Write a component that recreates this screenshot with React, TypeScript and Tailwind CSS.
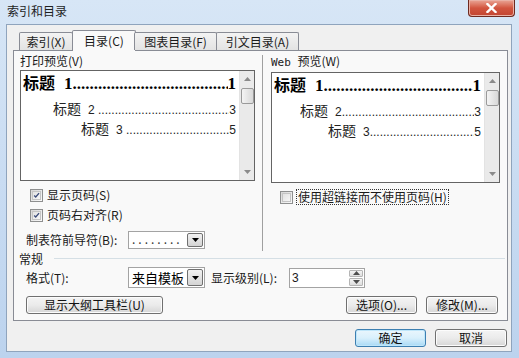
import React from 'react';

function Check({ checked }: { checked?: boolean }) {
  return (
    <span className="w-[13px] h-[13px] border border-[#8e8f8f] bg-gradient-to-br from-[#d6d6d6] to-[#fafafa] flex items-center justify-center shrink-0">
      <span className="w-[9px] h-[9px] border border-[#c4c4c4] bg-gradient-to-br from-[#e2e2e2] to-[#f6f6f6] flex items-center justify-center">
        {checked && (
          <svg width="9" height="9" viewBox="0 0 9 9">
            <path d="M1.5 4.5 L3.5 6.5 L7.8 1.5" fill="none" stroke="#3c4c7a" strokeWidth="1.7" />
          </svg>
        )}
      </span>
    </span>
  );
}

function Btn({ label, w, focus }: { label: string; w: string; focus?: boolean }) {
  return (
    <div
      className={`${w} h-[18px] rounded-[3px] border flex items-center justify-center text-[12px] leading-none text-[#111] ${
        focus
          ? 'border-[#3c7fb1] bg-gradient-to-b from-[#eaf6fd] via-[#d9f0fc] to-[#a7d9f5] shadow-[inset_0_0_0_1px_#bfe6fa]'
          : 'border-[#707070] bg-gradient-to-b from-[#f4f4f4] via-[#ebebeb] to-[#d6d6d6] shadow-[inset_0_0_0_1px_#fcfcfc]'
      }`}
    >
      {label}
    </div>
  );
}

function Arrow({ up }: { up?: boolean }) {
  return (
    <svg width="7" height="4" viewBox="0 0 7 4">
      <path d={up ? 'M0 4 L3.5 0 L7 4 Z' : 'M0 0 L3.5 4 L7 0 Z'} fill="#4d4d4d" />
    </svg>
  );
}

function DropBtn() {
  return (
    <div className="w-[16px] self-stretch m-px rounded-[2px] border border-[#707070] bg-gradient-to-b from-[#f2f2f2] to-[#d4d4d4] flex items-center justify-center">
      <svg width="7" height="4" viewBox="0 0 7 4">
        <path d="M0 0 L3.5 4 L7 0 Z" fill="#000" />
      </svg>
    </div>
  );
}

function ScrollBar() {
  return (
    <div className="w-[15px] shrink-0 bg-[#eaeaea] border-l border-[#e3e3e3] flex flex-col items-center pt-[6px] pb-[6px]">
      <svg width="7" height="4" viewBox="0 0 7 4">
        <path d="M0 4 L3.5 0 L7 4 Z" fill="#8a8a8a" />
      </svg>
      <div className="mt-[7px] w-[13px] h-[16px] rounded-[2px] border border-[#9a9a9a] bg-gradient-to-r from-[#f4f4f4] to-[#d8d8d8]" />
      <div className="flex-1" />
      <svg width="7" height="4" viewBox="0 0 7 4">
        <path d="M0 0 L3.5 4 L7 0 Z" fill="#8a8a8a" />
      </svg>
    </div>
  );
}

function Leader({ bold }: { bold?: boolean }) {
  return (
    <span className="flex-1 min-w-0 overflow-hidden whitespace-nowrap text-clip">
      {bold ? '.'.repeat(80) : '.'.repeat(120)}
    </span>
  );
}

function Preview({ web }: { web?: boolean }) {
  const sp = web ? '' : ' ';
  return (
    <div className={`${web ? 'w-[229px]' : 'w-[235px]'} h-[111px] border border-[#646464] bg-white flex`}>
      <div className="flex-1 min-w-0 flex flex-col pl-[2px] pr-[3px] pt-[3px] text-black">
        <div className="flex items-baseline h-[20px] font-['Liberation_Serif',serif] font-bold text-[17px] leading-none">
          <span className="font-['Noto_Sans_CJK_SC',sans-serif] text-[16px] mr-[9px]">标题</span>
          <span>1</span>
          <Leader bold />
          <span>1</span>
        </div>
        <div className={`flex items-baseline mt-[7px] ${web ? 'ml-[26px]' : 'ml-[30px]'} text-[12px] leading-none font-['Liberation_Sans',sans-serif] text-[#222]`}>
          <span className="font-['Noto_Sans_CJK_SC',sans-serif] text-[14px] mr-[7px]">标题</span>
          <span className="whitespace-pre">2{sp}</span>
          <Leader />
          <span>3</span>
        </div>
        <div className={`flex items-baseline mt-[5px] ${web ? 'ml-[54px]' : 'ml-[58px]'} text-[12px] leading-none font-['Liberation_Sans',sans-serif] text-[#222]`}>
          <span className="font-['Noto_Sans_CJK_SC',sans-serif] text-[14px] mr-[7px]">标题</span>
          <span className="whitespace-pre">3{sp}</span>
          <Leader />
          <span>5</span>
        </div>
      </div>
      <ScrollBar />
    </div>
  );
}

const tabs = [
  { label: '索引(X)', w: 'w-[54px]' },
  { label: '目录(C)', w: 'w-[64px]', active: true },
  { label: '图表目录(F)', w: 'w-[83px]' },
  { label: '引文目录(A)', w: 'w-[83px]' },
];

export default function App() {
  return (
    <div className="w-[519px] h-[358px] flex flex-col bg-gradient-to-b from-[#d7e6f6] via-[#c9dcf2] to-[#bcd3ee] font-['Noto_Sans_CJK_SC','Liberation_Sans',sans-serif] text-[12px] text-[#1a1a1a] overflow-hidden">
      {/* title bar */}
      <div className="h-[24px] shrink-0 flex items-start justify-between">
        <span className="pl-[7px] pt-[4px] text-[12px] leading-[14px] text-[#1e1e1e]">索引和目录</span>
        <div className="mr-[4px] w-[47px] h-[17px] rounded-b-[4px] border border-t-0 border-[#6e2a20] bg-gradient-to-b from-[#e9a596] via-[#d2553f] to-[#c14431] flex items-center justify-center shadow-[inset_0_0_0_1px_#eab1a5]">
          <svg width="11" height="10" viewBox="0 0 11 10">
            <path d="M1.5 1 L9.5 9 M9.5 1 L1.5 9" stroke="#fff" strokeWidth="2.4" strokeLinecap="square" />
          </svg>
        </div>
      </div>

      {/* client area */}
      <div className="flex-1 ml-[6px] mr-[7px] mb-[6px] border border-[#8fa4bd] bg-[#f0f0f0] pt-[5px] pl-[6px] pr-[3px] flex flex-col">
        {/* tabs */}
        <div className="h-[20px] flex items-end pl-[6px] relative z-10">
          {tabs.map(t =>
            t.active ? (
              <div
                key={t.label}
                className={`${t.w} h-[21px] -mb-px -mx-px border border-b-0 border-[#898c95] bg-[#f9f9f9] flex items-center justify-center leading-none rounded-t-[2px]`}
              >
                {t.label}
              </div>
            ) : (
              <div
                key={t.label}
                className={`${t.w} h-[18px] border border-b-0 border-[#898c95] -ml-px first:ml-0 bg-gradient-to-b from-[#f3f3f3] to-[#e3e3e3] flex items-center justify-center leading-none rounded-t-[2px]`}
              >
                {t.label}
              </div>
            ),
          )}
        </div>

        {/* panel */}
        <div className="h-[271px] border border-[#898c95] bg-[#f9f9f9] flex flex-col">
          <div className="h-[200px] flex">
            <div className="w-[248px] pl-[6px] pt-[3px] flex flex-col">
              <span className="leading-[14px]">打印预览(V)</span>
              <div className="mt-[2px]">
                <Preview />
              </div>
              <div className="mt-[6px] ml-[10px] h-[16px] flex items-center gap-[4px]">
                <Check checked />
                <span className="leading-none">显示页码(S)</span>
              </div>
              <div className="mt-[4px] ml-[10px] h-[16px] flex items-center gap-[4px]">
                <Check checked />
                <span className="leading-none">页码右对齐(R)</span>
              </div>
              <div className="mt-[8px] ml-[6px] h-[18px] flex items-center">
                <span className="w-[102px] leading-none">制表符前导符(B):</span>
                <div className="w-[77px] h-[18px] border border-[#a3a3a3] bg-white flex">
                  <span className="flex-1 pl-[3px] leading-[14px] tracking-[3px] text-[#333]">........</span>
                  <DropBtn />
                </div>
              </div>
            </div>
            <div className="w-px mt-[4px] bg-[#a0a0a0]" />
            <div className="flex-1 pl-[8px] pt-[3px] flex flex-col">
              <span className="leading-[14px] font-['DejaVu_Sans_Mono','Noto_Sans_CJK_SC',monospace] text-[11px]">
                Web <span className="font-['Noto_Sans_CJK_SC',sans-serif] text-[12px]">预览(W)</span>
              </span>
              <div className="mt-[2px]">
                <Preview web />
              </div>
              <div className="mt-[6px] ml-[9px] h-[16px] flex items-center gap-[3px]">
                <Check />
                <span className="leading-none px-px py-[1px] border border-dotted border-[#333]">使用超链接而不使用页码(H)</span>
              </div>
            </div>
          </div>

          {/* general */}
          <div className="h-[15px] flex items-center pl-[5px] pr-[2px]">
            <span className="leading-none">常规</span>
            <div className="flex-1 ml-[11px] h-px bg-[#d5dfe5]" />
          </div>
          <div className="mt-[1px] h-[21px] flex items-center pl-[12px]">
            <span className="w-[102px] leading-none">格式(T):</span>
            <div className="w-[77px] h-[21px] border border-[#a3a3a3] bg-white flex">
              <span className="flex-1 pl-[3px] text-[13px] leading-[19px] text-black">来自模板</span>
              <DropBtn />
            </div>
            <span className="ml-[6px] w-[78px] leading-none">显示级别(L):</span>
            <div className="w-[76px] h-[20px] border border-[#a3a3a3] bg-white flex">
              <span className="flex-1 pl-[2px] leading-[18px] font-['Liberation_Sans',sans-serif] text-[12px]">3</span>
              <div className="w-[16px] flex flex-col">
                <div className="flex-1 m-px mb-0 rounded-[1px] border border-[#b5b5b5] bg-gradient-to-b from-[#f4f4f4] to-[#dedede] flex items-center justify-center">
                  <Arrow up />
                </div>
                <div className="flex-1 m-px rounded-[1px] border border-[#b5b5b5] bg-gradient-to-b from-[#f4f4f4] to-[#dedede] flex items-center justify-center">
                  <Arrow />
                </div>
              </div>
            </div>
          </div>
          <div className="mt-[8px] h-[18px] flex items-center pl-[12px] pr-[9px]">
            <Btn label="显示大纲工具栏(U)" w="w-[137px]" />
            <div className="flex-1" />
            <Btn label="选项(O)..." w="w-[71px]" />
            <div className="w-[9px]" />
            <Btn label="修改(M)..." w="w-[72px]" />
          </div>
        </div>

        {/* dialog buttons */}
        <div className="mt-[8px] h-[19px] flex justify-end pr-px gap-[9px]">
          <Btn label="确定" w="w-[71px]" focus />
          <Btn label="取消" w="w-[72px]" />
        </div>
      </div>
    </div>
  );
}
